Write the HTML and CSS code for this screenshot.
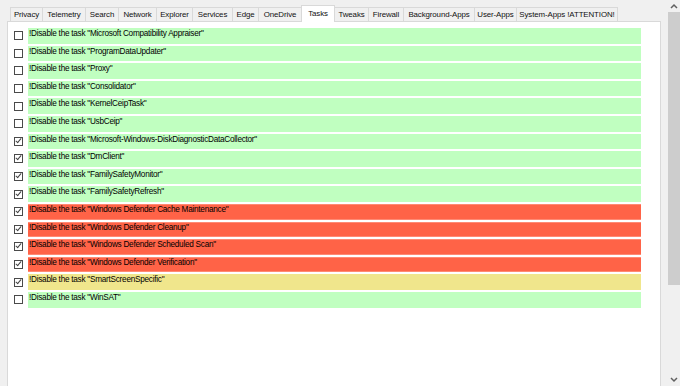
FILE: index.html
```html
<!DOCTYPE html>
<html lang="en">
<head>
    <meta charset="UTF-8">
    <title>Tasks</title>
    <link rel="stylesheet" href="styles.css">
</head>
<body>
    <div class="window">
        <div class="tabs-area">
            <div class="tabs">
                <div class="tab" style="width:31px">Privacy</div>
                <div class="tab" style="width:42px">Telemetry</div>
                <div class="tab" style="width:32px">Search</div>
                <div class="tab" style="width:37px">Network</div>
                <div class="tab" style="width:35px">Explorer</div>
                <div class="tab" style="width:39px">Services</div>
                <div class="tab" style="width:25px">Edge</div>
                <div class="tab" style="width:42px">OneDrive</div>
                <div class="tab active" style="width:32px">Tasks</div>
                <div class="tab" style="width:33px">Tweaks</div>
                <div class="tab" style="width:34px">Firewall</div>
                <div class="tab" style="width:70px">Background-Apps</div>
                <div class="tab" style="width:41px">User-Apps</div>
                <div class="tab" style="width:100px">System-Apps !ATTENTION!</div>
            </div>
            <div class="panel">
                <div class="row"><span class="box"></span><span class="bar green">!Disable the task "Microsoft Compatibility Appraiser"</span></div>
                <div class="row"><span class="box"></span><span class="bar green">!Disable the task "ProgramDataUpdater"</span></div>
                <div class="row"><span class="box"></span><span class="bar green">!Disable the task "Proxy"</span></div>
                <div class="row"><span class="box"></span><span class="bar green">!Disable the task "Consolidator"</span></div>
                <div class="row"><span class="box"></span><span class="bar green">!Disable the task "KernelCeipTask"</span></div>
                <div class="row"><span class="box"></span><span class="bar green">!Disable the task "UsbCeip"</span></div>
                <div class="row"><span class="box checked"></span><span class="bar green">!Disable the task "Microsoft-Windows-DiskDiagnosticDataCollector"</span></div>
                <div class="row"><span class="box checked"></span><span class="bar green">!Disable the task "DmClient"</span></div>
                <div class="row"><span class="box checked"></span><span class="bar green">!Disable the task "FamilySafetyMonitor"</span></div>
                <div class="row"><span class="box checked"></span><span class="bar green">!Disable the task "FamilySafetyRefresh"</span></div>
                <div class="row"><span class="box checked"></span><span class="bar red">!Disable the task "Windows Defender Cache Maintenance"</span></div>
                <div class="row"><span class="box checked"></span><span class="bar red">!Disable the task "Windows Defender Cleanup"</span></div>
                <div class="row"><span class="box checked"></span><span class="bar red">!Disable the task "Windows Defender Scheduled Scan"</span></div>
                <div class="row"><span class="box checked"></span><span class="bar red">!Disable the task "Windows Defender Verification"</span></div>
                <div class="row"><span class="box checked"></span><span class="bar yellow">!Disable the task "SmartScreenSpecific"</span></div>
                <div class="row"><span class="box"></span><span class="bar green">!Disable the task "WinSAT"</span></div>
            </div>
        </div>
        <div class="scrollbar">
            <div class="arrow">
                <svg width="8" height="6" viewBox="0 0 8 6"><path d="M1 5 L4 2 L7 5" fill="none" stroke="#606060" stroke-width="1.5"/></svg>
            </div>
            <div class="thumb"></div>
            <div class="track"></div>
            <div class="arrow">
                <svg width="8" height="6" viewBox="0 0 8 6"><path d="M1 1 L4 4 L7 1" fill="none" stroke="#606060" stroke-width="1.5"/></svg>
            </div>
        </div>
    </div>
</body>
</html>
```

FILE: styles.css
```css
body {
    margin: 0;
    background-color: #f0f0f0;
    font-family: 'Liberation Sans', Arial, sans-serif;
    font-size: 8.2px;
    letter-spacing: -0.25px;
    color: #000;
}

.window {
    display: flex;
    height: 386px;
    overflow: hidden;
}

.tabs-area {
    flex: none;
    width: 661px;
    box-sizing: border-box;
    padding: 6px 0 0 7px;
}

.tabs {
    display: flex;
    padding-left: 3px;
    height: 15px;
    align-items: flex-end;
    position: relative;
    z-index: 1;
}

.tab {
    height: 13px;
    line-height: 13px;
    text-align: center;
    background-color: #f0f0f0;
    border: 1px solid #d9d9d9;
    border-bottom: none;
    margin-right: -1px;
    white-space: nowrap;
    font-size: 7.9px;
    letter-spacing: -0.1px;
    color: #111;
}

.tab.active {
    height: 16px;
    line-height: 15px;
    background-color: #fff;
    margin-bottom: -1px;
    position: relative;
    z-index: 2;
}

.panel {
    background-color: #fff;
    border: 1px solid #d9d9d9;
    height: 400px;
    padding-top: 6px;
    box-sizing: border-box;
}

.row {
    display: flex;
    align-items: center;
    height: 15.6px;
    margin-bottom: 2px;
}

.box {
    width: 7px;
    height: 7px;
    border: 1px solid #4a4a4a;
    background-color: #fff;
    margin: 0 5px 0 6px;
    flex-shrink: 0;
    position: relative;
}

.box.checked::after {
    content: "";
    position: absolute;
    left: 2px;
    top: -1px;
    width: 2px;
    height: 5px;
    border: solid #444;
    border-width: 0 1px 1px 0;
    transform: rotate(40deg);
}

.bar {
    width: 613px;
    height: 100%;
    line-height: 12px;
    padding-left: 1px;
    box-sizing: border-box;
    white-space: nowrap;
}

.green {
    background-color: #c0ffc0;
}

.red {
    background-color: #ff6347;
    border-top: 1px solid #ff8a74;
    border-bottom: 1px solid #ff8a74;
    line-height: 10px;
}

.yellow {
    background-color: #f0e68c;
}

.scrollbar {
    flex: none;
    margin-left: 7px;
    width: 12px;
    display: flex;
    flex-direction: column;
    background-color: #f0f0f0;
}

.arrow {
    height: 12px;
    display: flex;
    align-items: center;
    justify-content: center;
}

.thumb {
    height: 273px;
    background-color: #cdcdcd;
}

.track {
    flex: 1;
}
```
